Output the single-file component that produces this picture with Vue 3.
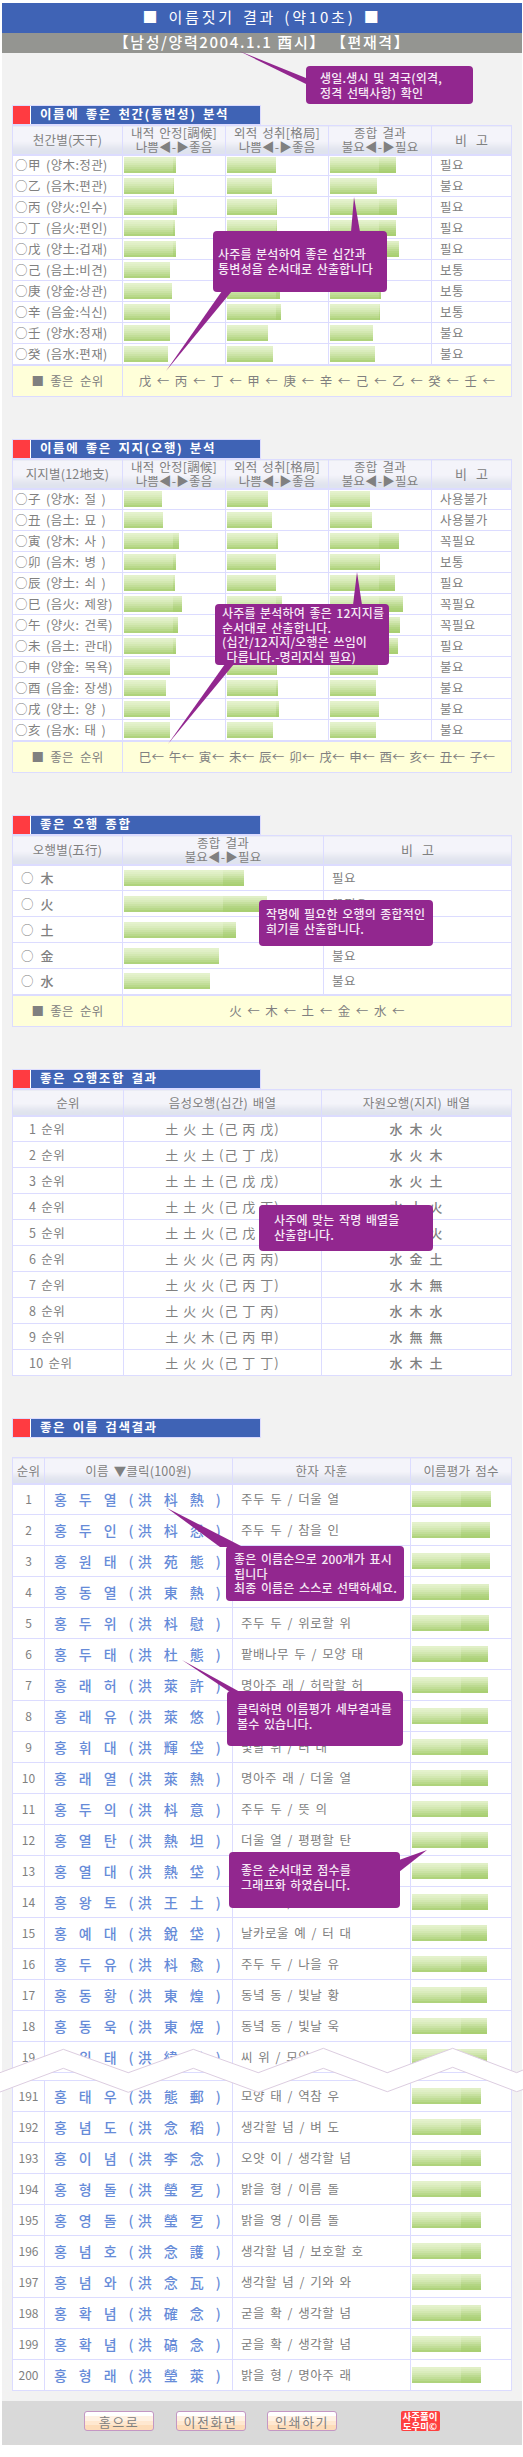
<script setup>
const heavenly = [
  { label: '○甲 (양木:정관)', bars: [52, 49, 66], note: '필요' },
  { label: '○乙 (음木:편관)', bars: [50, 45, 47], note: '불요' },
  { label: '○丙 (양火:인수)', bars: [53, 50, 67], note: '필요' },
  { label: '○丁 (음火:편인)', bars: [51, 50, 66], note: '필요' },
  { label: '○戊 (양土:겁재)', bars: [52, 50, 69], note: '필요' },
  { label: '○己 (음土:비견)', bars: [46, 50, 50], note: '보통' },
  { label: '○庚 (양金:상관)', bars: [48, 53, 51], note: '보통' },
  { label: '○辛 (음金:식신)', bars: [46, 54, 50], note: '보통' },
  { label: '○壬 (양水:정재)', bars: [46, 41, 43], note: '불요' },
  { label: '○癸 (음水:편재)', bars: [44, 46, 45], note: '불요' }
]
const earthly = [
  { label: '○子 (양水: 절 )', bars: [38, 41, 40], note: '사용불가' },
  { label: '○丑 (음土: 묘 )', bars: [39, 45, 42], note: '사용불가' },
  { label: '○寅 (양木: 사 )', bars: [55, 51, 69], note: '꼭필요' },
  { label: '○卯 (음木: 병 )', bars: [52, 49, 50], note: '보통' },
  { label: '○辰 (양土: 쇠 )', bars: [51, 49, 65], note: '필요' },
  { label: '○巳 (음火: 제왕)', bars: [58, 55, 73], note: '꼭필요' },
  { label: '○午 (양火: 건록)', bars: [54, 52, 70], note: '꼭필요' },
  { label: '○未 (음土: 관대)', bars: [52, 50, 68], note: '필요' },
  { label: '○申 (양金: 목욕)', bars: [46, 50, 48], note: '불요' },
  { label: '○酉 (음金: 장생)', bars: [42, 51, 46], note: '불요' },
  { label: '○戌 (양土: 양 )', bars: [46, 52, 49], note: '불요' },
  { label: '○亥 (음水: 태 )', bars: [46, 46, 46], note: '불요' }
]
const elements = [
  { label: '木', bar: 120, note: '필요' },
  { label: '火', bar: 143, note: '꼭필요' },
  { label: '土', bar: 112, note: '필요' },
  { label: '金', bar: 95, note: '불요' },
  { label: '水', bar: 86, note: '불요' }
]
const combos = [
  ['1 순위', '土 火 土 (己 丙 戊)', '水 木 火'],
  ['2 순위', '土 火 土 (己 丁 戊)', '水 火 木'],
  ['3 순위', '土 土 土 (己 戊 戊)', '水 火 土'],
  ['4 순위', '土 土 火 (己 戊 丙)', '水 土 火'],
  ['5 순위', '土 土 火 (己 戊 丁)', '水 金 火'],
  ['6 순위', '土 火 火 (己 丙 丙)', '水 金 土'],
  ['7 순위', '土 火 火 (己 丙 丁)', '水 木 無'],
  ['8 순위', '土 火 火 (己 丁 丙)', '水 木 水'],
  ['9 순위', '土 火 木 (己 丙 甲)', '水 無 無'],
  ['10 순위', '土 火 火 (己 丁 丁)', '水 木 土']
]
const topNames = [
  [1, '홍 두 열 (洪 枓 熱 )', '주두 두 / 더울 열', 79],
  [2, '홍 두 인 (洪 枓 忍 )', '주두 두 / 참을 인', 78],
  [3, '홍 원 태 (洪 苑 態 )', '나라동산 원 / 모양 태', 78],
  [4, '홍 동 열 (洪 東 熱 )', '동녘 동 / 더울 열', 77],
  [5, '홍 두 위 (洪 枓 慰 )', '주두 두 / 위로할 위', 77],
  [6, '홍 두 태 (洪 杜 態 )', '팥배나무 두 / 모양 태', 76],
  [7, '홍 래 허 (洪 萊 許 )', '명아주 래 / 허락할 허', 76],
  [8, '홍 래 유 (洪 萊 悠 )', '명아주 래 / 멀 유', 76],
  [9, '홍 휘 대 (洪 輝 垈 )', '빛날 휘 / 터 대', 76],
  [10, '홍 래 열 (洪 萊 熱 )', '명아주 래 / 더울 열', 76],
  [11, '홍 두 의 (洪 枓 意 )', '주두 두 / 뜻 의', 76],
  [12, '홍 열 탄 (洪 熱 坦 )', '더울 열 / 평평할 탄', 76],
  [13, '홍 열 대 (洪 熱 垈 )', '더울 열 / 터 대', 76],
  [14, '홍 왕 토 (洪 王 土 )', '임금 왕 / 흙 토', 76],
  [15, '홍 예 대 (洪 銳 垈 )', '날카로울 예 / 터 대', 75],
  [16, '홍 두 유 (洪 枓 愈 )', '주두 두 / 나을 유', 75],
  [17, '홍 동 황 (洪 東 煌 )', '동녘 동 / 빛날 황', 75],
  [18, '홍 동 욱 (洪 東 煜 )', '동녘 동 / 빛날 욱', 75],
  [19, '홍 위 태 (洪 緯 態 )', '씨 위 / 모양 태', 75]
]
const lastNames = [
  [191, '홍 태 우 (洪 態 郵 )', '모양 태 / 역참 우', 69],
  [192, '홍 념 도 (洪 念 稻 )', '생각할 념 / 벼 도', 69],
  [193, '홍 이 념 (洪 李 念 )', '오얏 이 / 생각할 념', 69],
  [194, '홍 형 돌 (洪 瑩 乭 )', '밝을 형 / 이름 돌', 69],
  [195, '홍 영 돌 (洪 瑩 乭 )', '밝을 영 / 이름 돌', 69],
  [196, '홍 념 호 (洪 念 護 )', '생각할 념 / 보호할 호', 69],
  [197, '홍 념 와 (洪 念 瓦 )', '생각할 념 / 기와 와', 69],
  [198, '홍 확 념 (洪 確 念 )', '굳을 확 / 생각할 념', 69],
  [199, '홍 확 념 (洪 碻 念 )', '굳을 확 / 생각할 념', 69],
  [200, '홍 형 래 (洪 瑩 萊 )', '밝을 형 / 명아주 래', 69]
]
const tips = [
  { cls: 'tip1', text: '생일.생시 및 격국(외격,\n정격 선택사항) 확인' },
  { cls: 'tip2', text: '사주를 분석하여 좋은 십간과\n통변성을 순서대로 산출합니다' },
  { cls: 'tip3', text: '사주를 분석하여 좋은 12지지를\n순서대로 산출합니다.\n(십간/12지지/오행은 쓰임이\n 다릅니다.-명리지식 필요)' },
  { cls: 'tip4', text: '작명에 필요한 오행의 종합적인\n희기를 산출합니다.' },
  { cls: 'tip5', text: '사주에 맞는 작명 배열을\n산출합니다.' },
  { cls: 'tip6', text: '좋은 이름순으로 200개가 표시\n됩니다\n최종 이름은 스스로 선택하세요.' },
  { cls: 'tip7', text: '클릭하면 이름평가 세부결과를\n볼수 있습니다.' },
  { cls: 'tip8', text: '좋은 순서대로 점수를\n그래프화 하였습니다.' }
]
const tails = [
  '239,51 306,78 306,84',
  '354,197 351,232 360,232',
  '222,291 232,291 166,371',
  '357,572 353,605 362,605',
  '225,664 234,664 168,744',
  '167,1508 220,1547 243,1547',
  '182,1660 230,1692 240,1692',
  '427,1850 399,1860 399,1872'
]
const waveTop = '0,2072.7 63.3,2049.3 128.3,2072.7 193.3,2049.3 258.3,2072.7 323.3,2048.3 387.3,2072.7 452.7,2048.3 516.7,2072.7 523,2070'
const waveBottom = '0,2092 63.3,2068.3 128.3,2092.3 193.3,2068.3 258.3,2092.3 323.3,2068.3 387.3,2091.7 452.7,2067.3 516.7,2091.7 523,2089.5'
const waveFill = waveTop + ' ' + waveBottom.split(' ').reverse().join(' ')

function segs(width, brk = 49) {
  return width > brk ? [brk, width - brk] : [width]
}
</script>

<template>
  <div class="page">
    <div class="sheet">
      <h1 class="title">■ 이름짓기 결과 (약10초) ■</h1>
      <p class="sub">【남성/양력2004.1.1 酉시】 【편재격】</p>

      <main class="main">
        <section>
          <h2 class="bar-title"><i class="red"></i><span>이름에 좋은 천간(통변성) 분석</span></h2>
          <table class="grid five">
            <colgroup><col class="c-a" /><col class="c-b" /><col class="c-b" /><col class="c-b" /><col /></colgroup>
            <thead>
              <tr class="hd">
                <th>천간별(天干)</th>
                <th>내적 안정[調候]<br />나쁨◀-▶좋음</th>
                <th>외적 성취[格局]<br />나쁨◀-▶좋음</th>
                <th>종합 결과<br />불요◀-▶필요</th>
                <th class="wide">비 고</th>
              </tr>
            </thead>
            <tbody>
              <tr v-for="r in heavenly" :key="r.label" class="row21">
                <td class="lbl">{{ r.label }}</td>
                <td v-for="(b, i) in r.bars" :key="i" class="bc">
                  <div class="bar"><i v-for="(s, j) in segs(b)" :key="j" :class="{ dark: j === 1 }" :style="{ width: s + 'px' }"></i></div>
                </td>
                <td class="note">{{ r.note }}</td>
              </tr>
              <tr class="rank">
                <td>■ 좋은 순위</td>
                <td colspan="4" class="order">戊 ← 丙 ← 丁 ← 甲 ← 庚 ← 辛 ← 己 ← 乙 ← 癸 ← 壬 ←</td>
              </tr>
            </tbody>
          </table>
        </section>

        <section>
          <h2 class="bar-title"><i class="red"></i><span>이름에 좋은 지지(오행) 분석</span></h2>
          <table class="grid five">
            <colgroup><col class="c-a" /><col class="c-b" /><col class="c-b" /><col class="c-b" /><col /></colgroup>
            <thead>
              <tr class="hd">
                <th>지지별(12地支)</th>
                <th>내적 안정[調候]<br />나쁨◀-▶좋음</th>
                <th>외적 성취[格局]<br />나쁨◀-▶좋음</th>
                <th>종합 결과<br />불요◀-▶필요</th>
                <th class="wide">비 고</th>
              </tr>
            </thead>
            <tbody>
              <tr v-for="r in earthly" :key="r.label" class="row21">
                <td class="lbl">{{ r.label }}</td>
                <td v-for="(b, i) in r.bars" :key="i" class="bc">
                  <div class="bar"><i v-for="(s, j) in segs(b)" :key="j" :class="{ dark: j === 1 }" :style="{ width: s + 'px' }"></i></div>
                </td>
                <td class="note">{{ r.note }}</td>
              </tr>
              <tr class="rank">
                <td>■ 좋은 순위</td>
                <td colspan="4" class="order tight">巳← 午← 寅← 未← 辰← 卯← 戌← 申← 酉← 亥← 丑← 子←</td>
              </tr>
            </tbody>
          </table>
        </section>

        <section>
          <h2 class="bar-title"><i class="red"></i><span>좋은 오행 종합</span></h2>
          <table class="grid three">
            <colgroup><col class="c-a" /><col class="c-m" /><col /></colgroup>
            <thead>
              <tr class="hd">
                <th>오행별(五行)</th>
                <th>종합 결과<br />불요◀-▶필요</th>
                <th class="wide">비 고</th>
              </tr>
            </thead>
            <tbody>
              <tr v-for="r in elements" :key="r.label" class="row26">
                <td class="elem"><span class="ring">○</span><b>{{ r.label }}</b></td>
                <td class="bc">
                  <div class="bar"><i v-for="(s, j) in segs(r.bar, 99)" :key="j" :class="{ dark: j === 1 }" :style="{ width: s + 'px' }"></i></div>
                </td>
                <td class="note n3">{{ r.note }}</td>
              </tr>
              <tr class="rank">
                <td>■ 좋은 순위</td>
                <td colspan="2" class="order">火 ← 木 ← 土 ← 金 ← 水 ←</td>
              </tr>
            </tbody>
          </table>
        </section>

        <section>
          <h2 class="bar-title"><i class="red"></i><span>좋은 오행조합 결과</span></h2>
          <table class="grid three">
            <colgroup><col class="c-r" /><col class="c-n" /><col /></colgroup>
            <thead>
              <tr class="hd short">
                <th>순위</th>
                <th>음성오행(십간) 배열</th>
                <th>자원오행(지지) 배열</th>
              </tr>
            </thead>
            <tbody>
              <tr v-for="c in combos" :key="c[0]" class="row26">
                <td class="pos">{{ c[0] }}</td>
                <td class="mid">{{ c[1] }}</td>
                <td class="mid strong">{{ c[2] }}</td>
              </tr>
            </tbody>
          </table>
        </section>

        <section>
          <h2 class="bar-title spaced"><i class="red"></i><span>좋은 이름 검색결과</span></h2>
          <table class="grid names">
            <colgroup><col class="c-1" /><col class="c-2" /><col class="c-3" /><col /></colgroup>
            <thead>
              <tr class="hd short">
                <th>순위</th>
                <th>이름 ▼클릭(100원)</th>
                <th>한자 자훈</th>
                <th>이름평가 점수</th>
              </tr>
            </thead>
            <tbody>
              <tr v-for="n in topNames" :key="n[0]" class="row31">
                <td class="num">{{ n[0] }}</td>
                <td class="name">{{ n[1] }}</td>
                <td class="mean">{{ n[2] }}</td>
                <td class="bc">
                  <div class="bar"><i v-for="(s, j) in segs(n[3])" :key="j" :class="{ dark: j === 1 }" :style="{ width: s + 'px' }"></i></div>
                </td>
              </tr>
              <tr class="gap"><td colspan="4"></td></tr>
              <tr v-for="n in lastNames" :key="n[0]" class="row31">
                <td class="num">{{ n[0] }}</td>
                <td class="name">{{ n[1] }}</td>
                <td class="mean">{{ n[2] }}</td>
                <td class="bc">
                  <div class="bar"><i v-for="(s, j) in segs(n[3])" :key="j" :class="{ dark: j === 1 }" :style="{ width: s + 'px' }"></i></div>
                </td>
              </tr>
            </tbody>
          </table>
        </section>
      </main>

      <footer class="foot">
        <button class="btn">홈으로</button>
        <button class="btn">이전화면</button>
        <button class="btn">인쇄하기</button>
        <div class="stamp"><span>사주풀이</span><span>도우미©</span></div>
      </footer>
    </div>

    <svg class="overlay" width="523" height="2457" viewBox="0 0 523 2457" aria-hidden="true">
      <polygon :points="waveFill" fill="#fff" />
      <polyline :points="waveTop" fill="none" stroke="#dccde0" stroke-width="1" />
      <polyline :points="waveBottom" fill="none" stroke="#dccde0" stroke-width="1" />
      <polygon v-for="t in tails" :key="t" :points="t" fill="#92278f" />
    </svg>
    <div v-for="t in tips" :key="t.cls" class="tip" :class="t.cls">{{ t.text }}</div>
  </div>
</template>

<style>
html, body { margin: 0; padding: 0; background: #fff; }
</style>

<style scoped>
.page {
  position: relative;
  width: 523px;
  height: 2457px;
  padding-top: 3px;
  box-sizing: border-box;
  font-family: "Noto Sans CJK KR", "Noto Sans", sans-serif;
  color: #808080;
  overflow: hidden;
}
.sheet { margin-left: 2px; width: 520px; }
.title {
  margin: 0;
  height: 30px;
  line-height: 28px;
  background: #3f63b5;
  color: #fff;
  font-size: 15px;
  font-weight: 400;
  text-align: center;
  letter-spacing: 2.8px;
  word-spacing: 2px;
}
.sub {
  margin: 0;
  height: 20px;
  line-height: 18px;
  background: #949591;
  color: #fff;
  font-size: 15px;
  font-weight: 500;
  text-align: center;
  letter-spacing: 1.6px;
}
.main {
  background: #f2f2f2;
  padding: 52px 0 10px 10px;
}
section + section { margin-top: 42px; }
.bar-title {
  margin: 0;
  width: 249px;
  height: 20px;
  box-sizing: border-box;
  display: flex;
  border: 1px solid #dcdcff;
  background: #fff;
  font-size: 12.5px;
  font-weight: 700;
  line-height: 15px;
  color: #fff;
  letter-spacing: 1.6px;
  word-spacing: 2px;
}
.bar-title.spaced { margin-bottom: 19px; }
.red { width: 17px; background: #ff3b41; margin-right: 1px; }
.bar-title span { flex: 1; background: #3f63b5; padding-left: 9px; }
.grid {
  width: 500px;
  table-layout: fixed;
  border-collapse: collapse;
  background: #fff;
  font-size: 12.5px;
  line-height: 14px;
}
th, td {
  border: 1px solid #dcdcff;
  padding: 0;
  font-weight: 400;
  white-space: nowrap;
}
.c-a { width: 110px; }
.c-b { width: 103px; }
.c-m { width: 201px; }
.c-r { width: 111px; }
.c-n { width: 198px; }
.c-1 { width: 32px; }
.c-2 { width: 188px; }
.c-3 { width: 178px; }
.hd { height: 29px; }
.hd.short { height: 26px; }
.hd th {
  color: #808080;
  text-align: center;
  letter-spacing: 0.2px;
  word-spacing: 2px;
  line-height: 13.5px;
  border-bottom-width: 2px;
  background: linear-gradient(180deg, #f4f4fa 0 52%, #eeeff6 62%, #e6e8f1 74%, #dfe3ee 88%, #dfe3ee 100%);
}
.hd th.wide { font-size: 13px; letter-spacing: 0; word-spacing: 6px; }
.row21 { height: 21px; }
.row26 { height: 26px; }
.row31 { height: 31px; }
.gap { height: 8px; }
.lbl { padding-left: 2px; letter-spacing: 0.4px; word-spacing: 2px; }
.bc { padding-left: 1px; vertical-align: middle; }
.bar { display: flex; height: 16px; }
.bar i {
  display: block;
  height: 16px;
  background: linear-gradient(180deg,
    #e4f2cc 0 2px, #e0efc6 2px 4px, #daecbd 4px 6px, #d3e8b2 6px 8px,
    #cbe3a6 8px 10px, #c2de99 10px 12px, #b9d98b 12px 14px, #afd37c 14px 16px);
}
.bar i.dark {
  background: linear-gradient(180deg,
    #e0efc6 0 2px, #d9ebbb 2px 4px, #d0e6ae 4px 6px, #c6e09f 6px 8px,
    #bcda91 8px 10px, #b3d583 10px 12px, #add27a 12px 14px, #a9cf72 14px 16px);
}
.note { padding-left: 8px; letter-spacing: 0.4px; }
.n3 { padding-left: 8px; }
.rank { height: 32px; background: #ffffd9; }
.rank td { text-align: center; border-top-width: 2px; letter-spacing: 0.3px; word-spacing: 3px; }
.rank td.order { word-spacing: 2.2px; }
.rank td.order.tight { word-spacing: 1.4px; }
.elem { padding-left: 8px; }
.ring { margin-right: 7px; }
.elem b { font-weight: 500; font-size: 13px; }
.pos { padding-left: 16px; letter-spacing: 0.3px; word-spacing: 2px; }
.mid { text-align: center; word-spacing: 0; letter-spacing: 1px; font-size: 13px; }
.mid.strong { font-weight: 500; letter-spacing: 1px; word-spacing: 2px; }
.num { text-align: center; font-size: 12px; }
.name {
  color: #668bd8;
  font-size: 14px;
  font-weight: 500;
  padding-left: 9px;
  letter-spacing: 4.4px;
  word-spacing: 0;
}
.mean { padding-left: 8px; letter-spacing: 0.5px; word-spacing: 2px; }
.foot {
  display: flex;
  align-items: flex-start;
  gap: 21.5px;
  height: 44px;
  box-sizing: border-box;
  background: #d9d9d9;
  padding: 10px 0 0 82px;
}
.btn {
  width: 70px;
  height: 20px;
  box-sizing: border-box;
  padding: 0;
  border: 1px solid #c497c4;
  border-radius: 3px;
  background: linear-gradient(180deg, #fff 0 25%, #fff2e4 25% 50%, #ffe8d0 50% 70%, #fddcb9 70% 100%);
  font: 400 13px/15px "Noto Sans CJK KR", sans-serif;
  color: #808080;
  letter-spacing: 1.5px;
}
.stamp {
  margin-left: 42px;
  width: 39px;
  height: 20px;
  display: flex;
  flex-direction: column;
  background: #ff4040;
  border-radius: 2px;
  color: #fff;
  font-size: 9.5px;
  font-weight: 700;
  line-height: 10px;
  text-align: center;
  white-space: nowrap;
  overflow: hidden;
}
.overlay { position: absolute; left: 0; top: 0; pointer-events: none; }
.tip {
  position: absolute;
  box-sizing: border-box;
  background: #92278f;
  border-radius: 4px;
  color: #f6eaf6;
  font-size: 12px;
  font-weight: 500;
  line-height: 14.5px;
  white-space: pre;
  letter-spacing: 0.2px;
  word-spacing: 1.5px;
}
.tip1 { left: 306px; top: 66px; width: 167px; height: 38px; padding: 5px 0 0 14px; }
.tip2 { left: 213px; top: 231px; width: 174px; height: 61px; padding: 16px 0 0 5px; }
.tip3 { left: 215px; top: 604px; width: 174px; height: 61px; padding: 2px 0 0 7px; }
.tip4 { left: 259px; top: 900px; width: 174px; height: 46px; padding: 7px 0 0 7px; }
.tip5 { left: 259px; top: 1205px; width: 174px; height: 46px; padding: 8px 0 0 15px; }
.tip6 { left: 226px; top: 1546px; width: 178px; height: 55px; padding: 6px 0 0 8px; }
.tip7 { left: 227px; top: 1691px; width: 176px; height: 55px; padding: 11px 0 0 10px; }
.tip8 { left: 229px; top: 1852px; width: 171px; height: 56px; padding: 11px 0 0 12px; }
</style>
